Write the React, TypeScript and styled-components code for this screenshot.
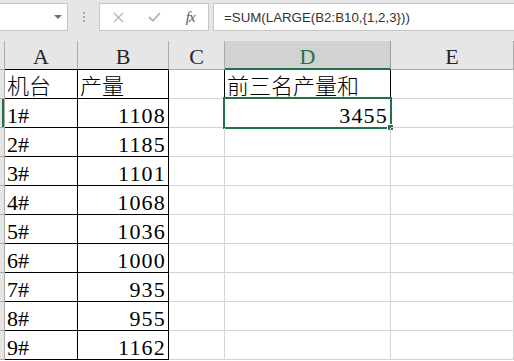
import styled, { createGlobalStyle } from 'styled-components';

const GREEN = '#217346';
const GRID = '#d4d4d4';
const HEAD_LINE = '#ababab';

const GlobalStyle = createGlobalStyle`
  html, body {
    margin: 0;
    padding: 0;
    background: #ffffff;
    overflow: hidden;
  }
`;

const Sheet = styled.div`
  width: 514px;
  height: 361px;
  overflow: hidden;
  background: #ffffff;
`;

/* ---------- formula bar ---------- */

const Toolbar = styled.div`
  height: 41px;
  background: #e6e6e6;
  display: flex;
  align-items: flex-start;
  padding-top: 3px;
  box-sizing: border-box;
`;

const NameBox = styled.div`
  width: 69px;
  height: 28px;
  margin-left: -1px;
  box-sizing: border-box;
  background: #ffffff;
  border: 1px solid #c6c6c6;
  display: flex;
  align-items: center;
  justify-content: flex-end;
  padding-right: 5px;
`;

const DropArrow = styled.span`
  width: 0;
  height: 0;
  border-left: 4px solid transparent;
  border-right: 4px solid transparent;
  border-top: 4px solid #707070;
`;

const Grip = styled.div`
  width: 31px;
  height: 28px;
  display: flex;
  flex-direction: column;
  align-items: center;
  justify-content: center;
  gap: 2px;

  span {
    width: 2px;
    height: 2px;
    background: #a8a8a8;
  }
`;

const ButtonBox = styled.div`
  width: 110px;
  height: 28px;
  box-sizing: border-box;
  background: #ffffff;
  border: 1px solid #c6c6c6;
  display: flex;
  align-items: center;
  padding-left: 1px;
`;

const BarButton = styled.div`
  width: 36px;
  height: 26px;
  display: flex;
  align-items: center;
  justify-content: center;
`;

const FxLabel = styled.span`
  font-family: 'Liberation Serif', serif;
  font-style: italic;
  font-size: 15px;
  color: #555555;
  letter-spacing: -1px;
`;

const FormulaInput = styled.div`
  flex: 1;
  margin-left: 4px;
  height: 28px;
  box-sizing: border-box;
  background: #ffffff;
  border: 1px solid #c6c6c6;
  border-right: none;
  display: flex;
  align-items: center;
  padding-left: 10px;
  font-family: 'Liberation Sans', sans-serif;
  font-size: 13.3px;
  color: #333333;
  white-space: nowrap;
`;

/* ---------- grid ---------- */

const Grid = styled.div`
  display: grid;
  grid-template-columns: 5px 73px 91px 56px 166px 1fr;
  grid-auto-rows: 29px;
  font-family: 'Liberation Serif', 'Noto Sans CJK SC', serif;
  font-size: 22px;
  font-weight: 300;
  line-height: 22px;
  color: #000000;
`;

const ColHead = styled.div<{ $bottom: string; $right?: string; $active?: boolean }>`
  box-sizing: border-box;
  background: ${(p) => (p.$active ? '#d2d2d2' : '#e6e6e6')};
  color: ${(p) => (p.$active ? GREEN : '#262626')};
  border-right: 1px solid ${(p) => p.$right ?? HEAD_LINE};
  border-bottom: ${(p) => (p.$active ? `2px solid ${GREEN}` : `1px solid ${p.$bottom}`)};
  display: flex;
  align-items: flex-end;
  justify-content: center;
  padding-bottom: ${(p) => (p.$active ? '0' : '1px')};
`;

const RowHead = styled.div<{ $active?: boolean }>`
  box-sizing: border-box;
  background: #e6e6e6;
  border-right: 1px solid ${HEAD_LINE};
  border-bottom: 1px solid ${HEAD_LINE};
  box-shadow: ${(p) => (p.$active ? `inset -2px 0 0 ${GREEN}` : 'none')};
`;

const Cell = styled.div<{ $right: string; $bottom: string; $num?: boolean }>`
  position: relative;
  box-sizing: border-box;
  border-right: 1px solid ${(p) => p.$right};
  border-bottom: 1px solid ${(p) => p.$bottom};
  display: flex;
  align-items: flex-end;
  justify-content: ${(p) => (p.$num ? 'flex-end' : 'flex-start')};
  padding: 0 ${(p) => (p.$num ? '2px' : '0')} 0 ${(p) => (p.$num ? '0' : '2px')};
  letter-spacing: ${(p) => (p.$num ? '1.2px' : '0')};
  white-space: nowrap;
`;

const Selection = styled.div`
  position: absolute;
  top: -2px;
  left: -2px;
  right: -2px;
  bottom: -2px;
  border: 2px solid ${GREEN};
  pointer-events: none;
`;

const FillHandle = styled.div`
  position: absolute;
  right: -4px;
  bottom: -4px;
  width: 5px;
  height: 5px;
  background: ${GREEN};
  border: 1px solid #ffffff;
`;

const columns = ['A', 'B', 'C', 'D', 'E'];

const data: [string, string | number][] = [
  ['机台', '产量'],
  ['1#', 1108],
  ['2#', 1185],
  ['3#', 1101],
  ['4#', 1068],
  ['5#', 1036],
  ['6#', 1000],
  ['7#', 935],
  ['8#', 955],
  ['9#', 1162],
];

const headBottom = (col: string) => (col === 'A' || col === 'B' ? '#000000' : HEAD_LINE);

export default function App() {
  return (
    <Sheet>
      <GlobalStyle />
      <Toolbar>
        <NameBox>
          <DropArrow />
        </NameBox>
        <Grip>
          <span />
          <span />
          <span />
        </Grip>
        <ButtonBox>
          <BarButton>
            <svg width="11" height="11" viewBox="0 0 11 11">
              <path d="M1 1 L10 10 M10 1 L1 10" stroke="#b4b4b4" strokeWidth="1.3" fill="none" />
            </svg>
          </BarButton>
          <BarButton>
            <svg width="13" height="10" viewBox="0 0 13 10">
              <path d="M1 5 L4.8 8.8 L12 1.2" stroke="#b4b4b4" strokeWidth="1.8" fill="none" />
            </svg>
          </BarButton>
          <BarButton>
            <FxLabel>fx</FxLabel>
          </BarButton>
        </ButtonBox>
        <FormulaInput>=SUM(LARGE(B2:B10,{'{'}1,2,3{'}'}))</FormulaInput>
      </Toolbar>

      <Grid>
        <ColHead $bottom={HEAD_LINE} />
        {columns.map((c) => (
          <ColHead
            key={c}
            $bottom={headBottom(c)}
            $active={c === 'D'}
            $right={c === 'D' ? '#9b9b9b' : undefined}
          >
            {c}
          </ColHead>
        ))}

        {data.map(([name, value], i) => {
          const row = i + 1;
          const isNum = typeof value === 'number';
          return [
            <RowHead key={`h${row}`} $active={row === 2} />,
            <Cell key={`a${row}`} $right="#000" $bottom="#000">
              {name}
            </Cell>,
            <Cell key={`b${row}`} $right="#000" $bottom="#000" $num={isNum}>
              {value}
            </Cell>,
            <Cell key={`c${row}`} $right={row === 1 ? '#000' : GRID} $bottom={GRID} />,
            <Cell
              key={`d${row}`}
              $right={row === 1 ? '#000' : GRID}
              $bottom={row === 1 ? '#000' : GRID}
              $num={row === 2}
            >
              {row === 1 && '前三名产量和'}
              {row === 2 && (
                <>
                  3455
                  <Selection>
                    <FillHandle />
                  </Selection>
                </>
              )}
            </Cell>,
            <Cell key={`e${row}`} $right={GRID} $bottom={GRID} />,
          ];
        })}
      </Grid>
    </Sheet>
  );
}
